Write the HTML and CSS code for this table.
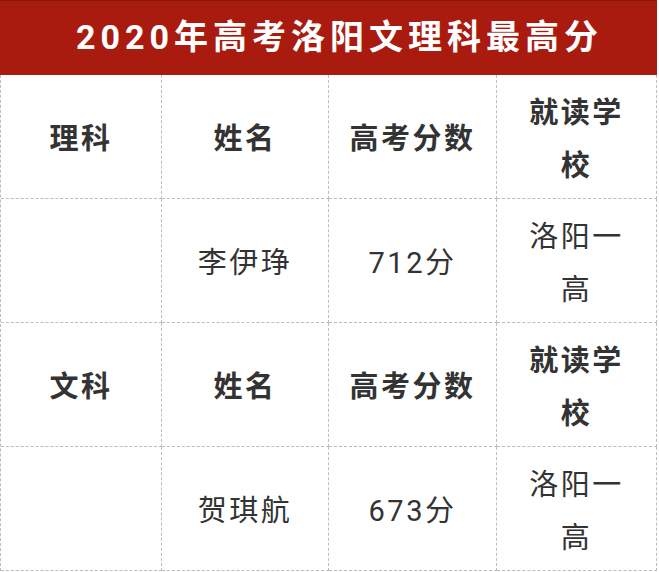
FILE: index.html
```html
<!DOCTYPE html>
<html lang="zh-CN">
<head>
<meta charset="utf-8">
<title>2020年高考洛阳文理科最高分</title>
<link rel="stylesheet" href="styles.css">
</head>
<body>
<div class="card">
  <div class="title">2020年高考洛阳文理科最高分</div>
  <div class="grid">
    <div class="cell head">理科</div>
    <div class="cell head">姓名</div>
    <div class="cell head">高考分数</div>
    <div class="cell head">就读学校</div>

    <div class="cell"></div>
    <div class="cell">李伊琤</div>
    <div class="cell">712分</div>
    <div class="cell">洛阳一高</div>

    <div class="cell head">文科</div>
    <div class="cell head">姓名</div>
    <div class="cell head">高考分数</div>
    <div class="cell head">就读学校</div>

    <div class="cell"></div>
    <div class="cell">贺琪航</div>
    <div class="cell">673分</div>
    <div class="cell">洛阳一高</div>
  </div>
</div>
</body>
</html>
```

FILE: styles.css
```css
html, body {
  margin: 0;
  padding: 0;
  background: #ffffff;
}

.card {
  width: 657px;
  font-family: Roboto, "Noto Sans CJK SC", sans-serif;
  color: #333333;
}

.title {
  height: 75px;
  box-sizing: border-box;
  border-top: 1px solid #8c160b;
  background: #aa1b0f;
  color: #ffffff;
  font-size: 34px;
  font-weight: 700;
  letter-spacing: 5px;
  line-height: 72px;
  text-align: center;
  padding-left: 22px;
}

.grid {
  display: grid;
  grid-template-columns: 161px 167px 168px 160px;
  grid-auto-rows: 124px;
  border-left: 1px dashed #bdbdbd;
}

.cell {
  box-sizing: border-box;
  border-right: 1px dashed #bdbdbd;
  border-bottom: 1px dashed #bdbdbd;
  display: flex;
  align-items: center;
  justify-content: center;
  text-align: center;
  padding: 6px 18px 0;
  font-size: 29px;
  letter-spacing: 2.5px;
  line-height: 53px;
}

.head {
  font-weight: 700;
}
```
